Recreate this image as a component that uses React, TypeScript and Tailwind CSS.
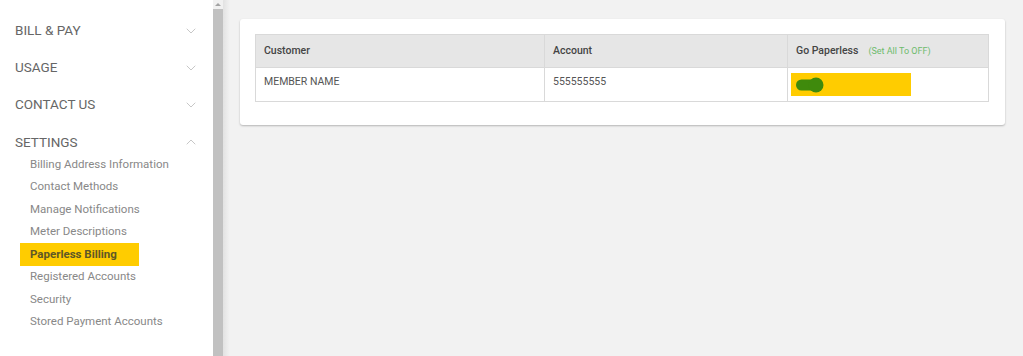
import { ChevronDown, ChevronUp } from 'lucide-react';

const sections = ['BILL & PAY', 'USAGE', 'CONTACT US'];

const settingsLinks = [
  'Billing Address Information',
  'Contact Methods',
  'Manage Notifications',
  'Meter Descriptions',
  'Paperless Billing',
  'Registered Accounts',
  'Security',
  'Stored Payment Accounts',
];

function Toggle() {
  return (
    <svg width="30" height="18" viewBox="0 0 30 18">
      <rect x="1" y="3.5" width="22" height="11" rx="5.5" fill="#3f8a0c" />
      <circle cx="21" cy="9" r="7.5" fill="#3f8a0c" />
    </svg>
  );
}

export default function App() {
  return (
    <div
      className="flex h-[356px] w-[1023px] overflow-hidden bg-[#f2f2f2]"
      style={{ fontFamily: 'Roboto, "Liberation Sans", sans-serif' }}
    >
      {/* Sidebar */}
      <div className="flex w-[213px] shrink-0 flex-col bg-white pt-[12px]">
        {sections.map((s) => (
          <div key={s} className="flex h-[37px] items-center justify-between pl-[15px] pr-[14px]">
            <span className="text-[13.5px] text-[#666]">{s}</span>
            <ChevronDown size={16} strokeWidth={1.25} className="text-[#bcbcbc]" />
          </div>
        ))}
        <div className="flex h-[30px] items-start justify-between pl-[15px] pr-[14px] pt-[9px]">
          <span className="text-[13.5px] leading-[20px] text-[#666]">SETTINGS</span>
          <ChevronUp size={16} strokeWidth={1.25} className="mt-[2px] text-[#bcbcbc]" />
        </div>
        <div className="flex flex-col">
          {settingsLinks.map((l) =>
            l === 'Paperless Billing' ? (
              <div key={l} className="flex h-[22.5px] items-center pl-[20px]">
                <span className="w-[119px] bg-[#ffcc00] px-[10px] text-[11.5px] font-bold leading-[23px] text-[#5e5826]">
                  {l}
                </span>
              </div>
            ) : (
              <div key={l} className="flex h-[22.5px] items-center pl-[30px]">
                <span className="text-[11.5px] text-[#888]">{l}</span>
              </div>
            )
          )}
        </div>
      </div>

      {/* Scrollbar */}
      <div className="flex w-[10px] shrink-0 flex-col bg-[#f1f1f1]">
        <div className="flex h-[9px] items-center justify-center">
          <div className="h-0 w-0 border-x-[3px] border-b-[3px] border-x-transparent border-b-[#a3a3a3]" />
        </div>
        <div className="flex-1 bg-[#c1c1c1]" />
      </div>
      <div className="w-[7px] shrink-0 bg-gradient-to-r from-[#e2e2e2] to-[#f2f2f2]" />

      {/* Main */}
      <div className="flex-1 pl-[10px] pr-[18px] pt-[19px]">
        <div className="rounded-[3px] bg-white pb-[23px] pl-[15px] pr-[16px] pt-[15px] shadow-[0_1px_2px_rgba(0,0,0,0.25)]">
          <table className="w-[734px] border-collapse border border-[#d9d9d9]">
            <thead>
              <tr className="h-[33px] bg-[#e6e6e6]">
                <th className="w-[289px] border border-[#d9d9d9] px-[8px] text-left text-[10.5px] font-medium text-[#444]">
                  Customer
                </th>
                <th className="w-[243px] border border-[#d9d9d9] px-[8px] text-left text-[10.5px] font-medium text-[#444]">
                  Account
                </th>
                <th className="border border-[#d9d9d9] px-[8px] text-left text-[10.5px] font-medium text-[#444]">
                  Go Paperless
                  <span className="ml-[10px] text-[9px] font-normal text-[#6dbb6d]">(Set All To OFF)</span>
                </th>
              </tr>
            </thead>
            <tbody>
              <tr className="h-[34px]">
                <td className="border border-[#d9d9d9] px-[8px] pt-[7px] align-top text-[10.5px] leading-[14px] text-[#555]">
                  MEMBER NAME
                </td>
                <td className="border border-[#d9d9d9] px-[8px] pt-[7px] align-top text-[10.5px] leading-[14px] text-[#555]">
                  555555555
                </td>
                <td className="border border-[#d9d9d9] pl-[3px]">
                  <div className="flex h-[23px] w-[120px] items-center bg-[#ffcc00] pl-[4px]">
                    <Toggle />
                  </div>
                </td>
              </tr>
            </tbody>
          </table>
        </div>
      </div>
    </div>
  );
}
